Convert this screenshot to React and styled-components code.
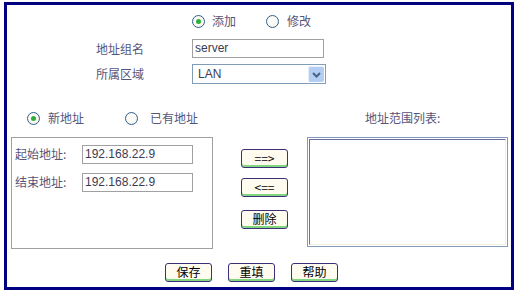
import React from 'react';
import styled, { createGlobalStyle } from 'styled-components';

const GlobalStyle = createGlobalStyle`
  html, body {
    margin: 0;
    padding: 0;
    background: #ffffff;
  }
  body {
    font-family: "Noto Sans CJK SC", "Liberation Sans", sans-serif;
    font-size: 12px;
  }
`;

const Frame = styled.div`
  box-sizing: border-box;
  margin: 2px 0 0 4px;
  width: 510px;
  height: 288px;
  border: 3px solid #000080;
  display: flex;
  flex-direction: column;
`;

const Row = styled.div`
  display: flex;
  align-items: center;
  height: ${(p) => p.h}px;
  margin-top: ${(p) => p.mt || 0}px;
`;

const LabelCell = styled.div`
  width: 185px;
  box-sizing: border-box;
  padding-left: 89px;
  color: #55557a;
  line-height: 14px;
`;

const RadioGroup = styled.div`
  display: flex;
  align-items: center;
  padding-left: ${(p) => p.pl || 0}px;
`;

const RadioItem = styled.label`
  display: flex;
  align-items: center;
  color: #55557a;
  width: ${(p) => p.w}px;
  line-height: 14px;
`;

const RadioDot = styled.span`
  box-sizing: border-box;
  width: 13px;
  height: 13px;
  border-radius: 50%;
  border: 1px solid #2f5f92;
  background: radial-gradient(circle at 40% 40%, #ffffff 0%, #f4f1e4 100%);
  display: flex;
  align-items: center;
  justify-content: center;
  margin-right: ${(p) => p.gap}px;

  &::after {
    content: '';
    display: ${(p) => (p.checked ? 'block' : 'none')};
    width: 5px;
    height: 5px;
    border-radius: 50%;
    background: #2fae3a;
  }
`;

const TextInput = styled.div`
  box-sizing: border-box;
  width: ${(p) => p.w}px;
  height: 19px;
  border: 1px solid #a0a0a0;
  background: #fff;
  color: #3c3c50;
  font-family: "Liberation Sans", sans-serif;
  font-size: 12px;
  line-height: 17px;
  padding-left: 2px;
`;

const Select = styled.div`
  box-sizing: border-box;
  width: 134px;
  height: 20px;
  border: 1px solid #7f9db9;
  background: #fff;
  display: flex;
  align-items: center;
  justify-content: space-between;
  font-family: "Liberation Sans", sans-serif;
  color: #3c3c50;
  padding: 0 1px 0 5px;
`;

const SelectArrow = styled.span`
  box-sizing: border-box;
  width: 16px;
  height: 16px;
  border-radius: 2px;
  background: #b4cdf2;
  border-top: 1px solid #e6eefc;
  border-left: 1px solid #e6eefc;
  display: flex;
  align-items: center;
  justify-content: center;
`;

const Middle = styled.div`
  display: flex;
  align-items: flex-start;
  height: 112px;
  margin-top: 5px;
`;

const AddrBox = styled.div`
  box-sizing: border-box;
  margin-left: 4px;
  width: 202px;
  height: 112px;
  border: 1px solid #a0a0a0;
  padding: 7px 0 0 3px;
  display: flex;
  flex-direction: column;
  gap: 10px;
`;

const AddrRow = styled.div`
  display: flex;
  align-items: center;
  height: 18px;
`;

const AddrLabel = styled.span`
  width: 67px;
  color: #55557a;
  line-height: 14px;
`;

const ButtonCol = styled.div`
  display: flex;
  flex-direction: column;
  margin-left: 28px;
  padding-top: 12px;
  gap: 10px;
`;

const Button = styled.button`
  box-sizing: border-box;
  width: 47px;
  height: 19px;
  padding: 0 0 1px;
  margin: 0;
  margin-top: ${(p) => p.mt || 0}px;
  border: 1px solid #3c2f78;
  border-radius: 3px;
  background: #fffbef;
  box-shadow: inset 0 -2px 0 #7fd67f;
  font-family: "Noto Sans CJK SC", sans-serif;
  font-size: 12px;
  line-height: 14px;
  color: #000;
`;

const ListSide = styled.div`
  margin-left: 19px;
  display: flex;
  flex-direction: column;
`;

const ListBox = styled.div`
  box-sizing: border-box;
  width: 201px;
  height: 110px;
  border: 1px solid #7f9db9;
  padding: 1px;
  background: #fff;
`;

const ListInner = styled.div`
  box-sizing: border-box;
  height: 100%;
  border-top: 1px solid #716f9b;
  border-left: 1px solid #716f9b;
  border-right: 1px solid #f1efe2;
  border-bottom: 1px solid #f1efe2;
`;

const ListTitle = styled.div`
  color: #55557a;
  margin-left: 80px;
  line-height: 14px;
`;

const Footer = styled.div`
  display: flex;
  justify-content: flex-start;
  padding: 14px 0 0 158px;
  gap: 16px;
`;

export default function App() {
  return (
    <>
      <GlobalStyle />
      <Frame>
        <Row h={32}>
          <RadioGroup pl={185}>
            <RadioItem w={74}>
              <RadioDot checked gap={7} />
              添加
            </RadioItem>
            <RadioItem w={60}>
              <RadioDot gap={8} />
              修改
            </RadioItem>
          </RadioGroup>
        </Row>
        <Row h={23}>
          <LabelCell>地址组名</LabelCell>
          <TextInput w={132}>server</TextInput>
        </Row>
        <Row h={28}>
          <LabelCell>所属区域</LabelCell>
          <Select>
            LAN
            <SelectArrow>
              <svg width="9" height="6" viewBox="0 0 9 6">
                <path d="M1 1 L4.5 4.5 L8 1" stroke="#4d6185" strokeWidth="2" fill="none" />
              </svg>
            </SelectArrow>
          </Select>
        </Row>
        <Row h={28} mt={16}>
          <RadioGroup pl={20}>
            <RadioItem w={98}>
              <RadioDot checked gap={8} />
              新地址
            </RadioItem>
            <RadioItem w={160}>
              <RadioDot gap={12} />
              已有地址
            </RadioItem>
          </RadioGroup>
          <ListTitle>地址范围列表:</ListTitle>
        </Row>
        <Middle>
          <AddrBox>
            <AddrRow>
              <AddrLabel>起始地址:</AddrLabel>
              <TextInput w={111}>192.168.22.9</TextInput>
            </AddrRow>
            <AddrRow>
              <AddrLabel>结束地址:</AddrLabel>
              <TextInput w={111}>192.168.22.9</TextInput>
            </AddrRow>
          </AddrBox>
          <ButtonCol>
            <Button>==&gt;</Button>
            <Button>&lt;==</Button>
            <Button mt={3}>删除</Button>
          </ButtonCol>
          <ListSide>
            <ListBox>
              <ListInner />
            </ListBox>
          </ListSide>
        </Middle>
        <Footer>
          <Button>保存</Button>
          <Button>重填</Button>
          <Button>帮助</Button>
        </Footer>
      </Frame>
    </>
  );
}
